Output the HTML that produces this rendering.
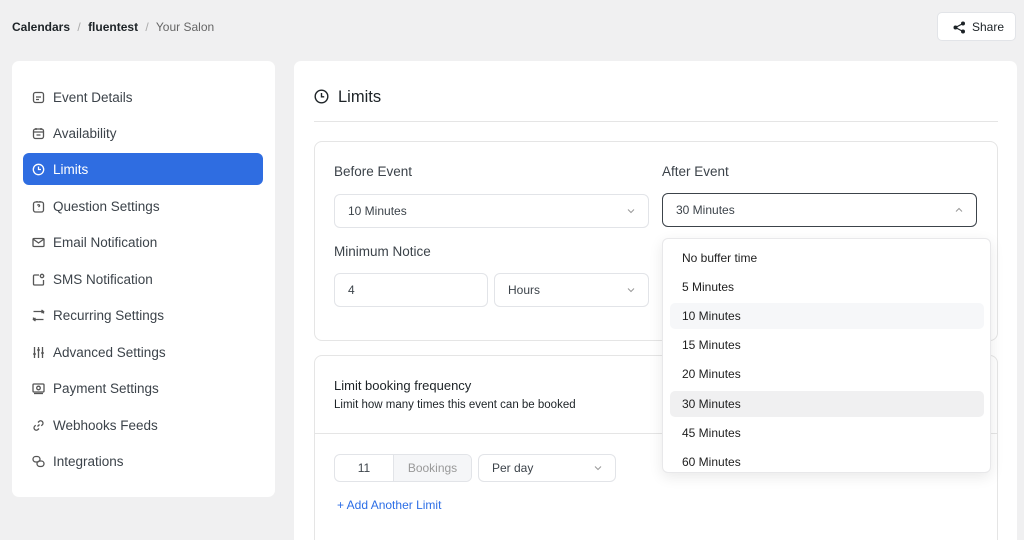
<!DOCTYPE html>
<html style="overflow:hidden;height:540px"><head><meta charset="utf-8"><style>
*{box-sizing:border-box;margin:0;padding:0}
body{width:1024px;height:540px;overflow:hidden;background:#f0f0f1;font-family:"Liberation Sans",sans-serif;color:#1e1e1e;position:relative}
.a{position:absolute}
.card{background:#fff;border-radius:7px}
.nav{position:absolute;left:23px;width:240px;height:32px;display:flex;align-items:center;font-size:13.5px;color:#3c434a}
.nav svg{position:absolute;left:9px;width:13px;height:13px;fill:none;stroke:#555;stroke-width:1.3}
.nav span{position:absolute;left:30px}
.nav.act{background:#2f6de1;color:#fff;border-radius:6px}
.nav.act svg{stroke:#fff}
.lbl{position:absolute;font-size:13.5px;color:#3c434a}
.sel{position:absolute;border:1px solid #e2e4e8;border-radius:6px;height:34px;font-size:12px;color:#3c434a;display:flex;align-items:center;padding-left:13px}
.chev{position:absolute;right:12px;top:11px;width:10px;height:10px}
.opt{position:absolute;left:670px;width:314px;height:26px;font-size:12px;color:#1e1e1e;padding-left:12px;line-height:26px;border-radius:5px}
</style></head><body>
<div class="a" style="left:12px;top:20px;font-size:12px;"><b style="color:#1d2327">Calendars</b> <span style="color:#aaa;margin:0 4px">/</span> <b style="color:#1d2327">fluentest</b> <span style="color:#aaa;margin:0 4px">/</span> <span style="color:#666">Your Salon</span></div>
<div class="a card" style="left:937px;top:12px;width:79px;height:29px;border:1px solid #e2e4e8;border-radius:5px;font-size:12px;display:flex;align-items:center;padding-left:34px;color:#1d2327">Share
<svg class="a" style="left:15px;top:8px" width="13" height="13" viewBox="0 0 13 13" fill="#1d2327" stroke="#1d2327" stroke-width="1.2"><circle cx="10" cy="2.5" r="1.4"/><circle cx="10" cy="10.5" r="1.4"/><circle cx="2.5" cy="6.5" r="1.4"/><path d="M10 2.5L2.5 6.5L10 10.5" fill="none"/></svg></div>

<div class="a card" style="left:12px;top:61px;width:263px;height:436px"></div>
<div class="nav" style="top:81px"><svg viewBox="0 0 13 13"><rect x="1.5" y="1.5" width="10" height="10" rx="2"/><path d="M4 6h5M4 8.5h3"/></svg><span>Event Details</span></div>
<div class="nav" style="top:117px"><svg viewBox="0 0 13 13"><rect x="1.5" y="2" width="10" height="9.5" rx="2"/><path d="M1.5 5h10M4 1v2M9 1v2M4.5 8h4"/></svg><span>Availability</span></div>
<div class="nav act" style="top:153px"><svg viewBox="0 0 13 13"><circle cx="6.5" cy="6.5" r="5.2"/><path d="M6.5 3.5v3h2.5"/></svg><span>Limits</span></div>
<div class="nav" style="top:190px"><svg viewBox="0 0 13 13"><rect x="1.5" y="2" width="10" height="10" rx="2"/><path d="M5 1v1.5M8 1v1.5M6.5 9v.3M5.5 5.5a1 1 0 112 .5l-1 1"/></svg><span>Question Settings</span></div>
<div class="nav" style="top:226px"><svg viewBox="0 0 13 13"><rect x="1" y="2.5" width="11" height="8" rx="1"/><path d="M1 3l5.5 4 5.5-4"/></svg><span>Email Notification</span></div>
<div class="nav" style="top:263px"><svg viewBox="0 0 13 13"><path d="M7 2H2.5a1 1 0 00-1 1v8a1 1 0 001 1h8a1 1 0 001-1V7"/><circle cx="10" cy="3" r="1.7"/></svg><span>SMS Notification</span></div>
<div class="nav" style="top:299px"><svg viewBox="0 0 13 13"><path d="M1.5 2.5h10v2M11.5 10.5h-10v-2M9.5 1l2 1.5-2 1.5M3.5 9l-2 1.5 2 1.5"/></svg><span>Recurring Settings</span></div>
<div class="nav" style="top:336px"><svg viewBox="0 0 13 13"><path d="M2.5 1v11M6.5 1v11M10.5 1v11M1 8h3M5 4h3M9 7h3"/></svg><span>Advanced Settings</span></div>
<div class="nav" style="top:372px"><svg viewBox="0 0 13 13"><rect x="1" y="2" width="11" height="8" rx="1"/><circle cx="6.5" cy="6" r="1.8"/><path d="M2 11.5h9"/></svg><span>Payment Settings</span></div>
<div class="nav" style="top:409px"><svg viewBox="0 0 13 13"><path d="M5.5 7.5l2-2M6 3.5l1-1a2.3 2.3 0 013.3 3.3l-1 1M7 9.5l-1 1a2.3 2.3 0 01-3.3-3.3l1-1"/></svg><span>Webhooks Feeds</span></div>
<div class="nav" style="top:445px"><svg viewBox="0 0 13 13"><rect x="1" y="1.5" width="7" height="5.5" rx="2.7"/><rect x="5" y="6" width="7" height="5.5" rx="2.7"/></svg><span>Integrations</span></div>

<div class="a card" style="left:294px;top:61px;width:723px;height:479px;border-radius:7px 7px 0 0"></div>
<svg class="a" style="left:314px;top:89px" width="15" height="15" viewBox="0 0 15 15" fill="none" stroke="#1d2327" stroke-width="1.4"><circle cx="7.5" cy="7.5" r="6.3"/><path d="M7.5 4v3.8h2.7"/></svg>
<div class="a" style="left:338px;top:88px;font-size:16.5px;color:#1d2327">Limits</div>
<div class="a" style="left:314px;top:121px;width:684px;height:1px;background:#e5e5e5"></div>

<div class="a" style="left:314px;top:141px;width:684px;height:200px;border:1px solid #e5e5e5;border-radius:8px"></div>
<div class="lbl" style="left:334px;top:164px">Before Event</div>
<div class="lbl" style="left:662px;top:164px">After Event</div>
<div class="sel" style="left:334px;top:194px;width:315px">10 Minutes<svg class="chev" viewBox="0 0 10 10" fill="none" stroke="#999"><path d="M2 3.5l3 3 3-3"/></svg></div>
<div class="sel" style="left:662px;top:193px;width:315px;border-color:#3c434a">30 Minutes<svg class="chev" viewBox="0 0 10 10" fill="none" stroke="#999"><path d="M2 6.5l3-3 3 3"/></svg></div>
<div class="lbl" style="left:334px;top:244px">Minimum Notice</div>
<div class="sel" style="left:334px;top:273px;width:154px">4</div>
<div class="sel" style="left:494px;top:273px;width:155px">Hours<svg class="chev" viewBox="0 0 10 10" fill="none" stroke="#999"><path d="M2 3.5l3 3 3-3"/></svg></div>

<div class="a" style="left:314px;top:355px;width:684px;height:200px;border:1px solid #e5e5e5;border-radius:8px"></div>
<div class="a" style="left:314px;top:433px;width:684px;height:1px;background:#e5e5e5"></div>
<div class="a" style="left:334px;top:378px;font-size:13px;color:#1d2327">Limit booking frequency</div>
<div class="a" style="left:334px;top:399px;font-size:11.5px;color:#1d2327">Limit how many times this event can be booked</div>
<div class="sel" style="left:334px;top:454px;width:138px;height:28px;padding:0;overflow:hidden"><span style="width:58px;text-align:center">11</span><span style="flex:1;height:100%;background:#f5f6f8;border-left:1px solid #e2e4e8;display:flex;align-items:center;justify-content:center;color:#999">Bookings</span></div>
<div class="sel" style="left:478px;top:454px;width:138px;height:28px">Per day<svg class="chev" style="top:8px" viewBox="0 0 10 10" fill="none" stroke="#999"><path d="M2 3.5l3 3 3-3"/></svg></div>
<div class="a" style="left:337px;top:498px;font-size:12px;color:#2c6ee6">+ Add Another Limit</div>

<div class="a" style="left:662px;top:238px;width:329px;height:235px;background:#fff;border:1px solid #e8e8ea;border-radius:6px;box-shadow:0 4px 14px rgba(0,0,0,.09)"></div>
<div class="opt" style="top:245px">No buffer time</div>
<div class="opt" style="top:274px">5 Minutes</div>
<div class="opt" style="top:303px;background:#f6f7f9">10 Minutes</div>
<div class="opt" style="top:332px">15 Minutes</div>
<div class="opt" style="top:361px">20 Minutes</div>
<div class="opt" style="top:391px;background:#f0f0f1">30 Minutes</div>
<div class="opt" style="top:420px">45 Minutes</div>
<div class="opt" style="top:449px">60 Minutes</div>
</body></html>
